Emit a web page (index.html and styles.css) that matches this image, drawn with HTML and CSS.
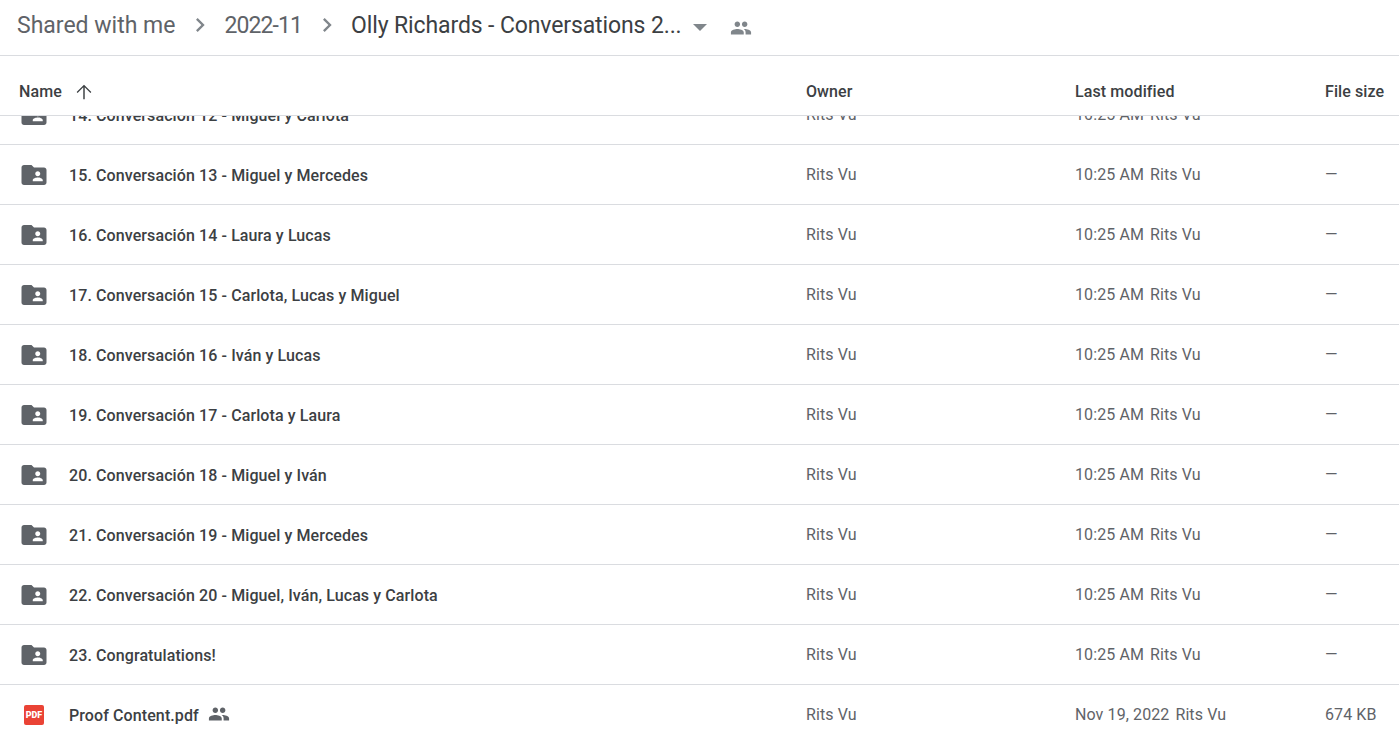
FILE: index.html
```html
<!DOCTYPE html>
<html lang="en">
<head>
<meta charset="utf-8">
<title>Olly Richards - Conversations 2</title>
<link rel="stylesheet" href="styles.css">
</head>
<body>
<svg class="defs" width="0" height="0" aria-hidden="true">
  <symbol id="folder" viewBox="0 0 24 24"><path d="M20 6h-8l-2-2H4c-1.1 0-1.99.9-1.99 2L2 18c0 1.1.9 2 2 2h16c1.1 0 2-.9 2-2V8c0-1.1-.9-2-2-2zm-5 3c1.1 0 2 .9 2 2s-.9 2-2 2-2-.9-2-2 .9-2 2-2zm4 8h-8v-1c0-1.33 2.67-2 4-2s4 .67 4 2v1z"/></symbol>
  <symbol id="people" viewBox="0 0 24 24"><path d="M16 11c1.66 0 2.99-1.34 2.99-3S17.66 5 16 5c-1.66 0-3 1.34-3 3s1.34 3 3 3zm-8 0c1.66 0 2.99-1.34 2.99-3S9.66 5 8 5C6.34 5 5 6.34 5 8s1.34 3 3 3zm0 2c-2.33 0-7 1.17-7 3.5V19h14v-2.5c0-2.33-4.67-3.5-7-3.5zm8 0c-.29 0-.62.02-.97.05 1.16.84 1.97 1.97 1.97 3.45V19h6v-2.5c0-2.33-4.67-3.5-7-3.5z"/></symbol>
  <symbol id="chevron" viewBox="0 0 24 24"><path d="M10 6L8.59 7.41 13.17 12l-4.58 4.59L10 18l6-6z"/></symbol>
</svg>

<header class="crumbs">
  <span class="crumb">Shared with me</span>
  <svg class="chev"><use href="#chevron"/></svg>
  <span class="crumb year">2022-11</span>
  <svg class="chev"><use href="#chevron"/></svg>
  <span class="crumb current">Olly Richards - Conversations 2...</span>
  <svg class="caret" viewBox="0 0 14 7"><path d="M0 0h14L7 7z"/></svg>
  <svg class="crumb-people"><use href="#people"/></svg>
</header>

<div class="row head">
  <div class="name-head">Name
    <svg class="arrow" viewBox="0 0 24 24"><path d="M4 12l1 1 6.2-6.3V20h1.6V6.7L19 13l1-1-8-8-8 8z"/></svg>
  </div>
  <div>Owner</div>
  <div>Last modified</div>
  <div>File size</div>
</div>

<main class="list">
  <div class="scroller">
    <div class="row item"><div class="name"><svg class="folder"><use href="#folder"/></svg><span class="label">14. Conversación 12 - Miguel y Carlota</span></div><div>Rits Vu</div><div class="mod"><span>10:25 AM</span><span>Rits Vu</span></div><div class="size">—</div></div>
    <div class="row item"><div class="name"><svg class="folder"><use href="#folder"/></svg><span class="label">15. Conversación 13 - Miguel y Mercedes</span></div><div>Rits Vu</div><div class="mod"><span>10:25 AM</span><span>Rits Vu</span></div><div class="size">—</div></div>
    <div class="row item"><div class="name"><svg class="folder"><use href="#folder"/></svg><span class="label">16. Conversación 14 - Laura y Lucas</span></div><div>Rits Vu</div><div class="mod"><span>10:25 AM</span><span>Rits Vu</span></div><div class="size">—</div></div>
    <div class="row item"><div class="name"><svg class="folder"><use href="#folder"/></svg><span class="label">17. Conversación 15 - Carlota, Lucas y Miguel</span></div><div>Rits Vu</div><div class="mod"><span>10:25 AM</span><span>Rits Vu</span></div><div class="size">—</div></div>
    <div class="row item"><div class="name"><svg class="folder"><use href="#folder"/></svg><span class="label">18. Conversación 16 - Iván y Lucas</span></div><div>Rits Vu</div><div class="mod"><span>10:25 AM</span><span>Rits Vu</span></div><div class="size">—</div></div>
    <div class="row item"><div class="name"><svg class="folder"><use href="#folder"/></svg><span class="label">19. Conversación 17 - Carlota y Laura</span></div><div>Rits Vu</div><div class="mod"><span>10:25 AM</span><span>Rits Vu</span></div><div class="size">—</div></div>
    <div class="row item"><div class="name"><svg class="folder"><use href="#folder"/></svg><span class="label">20. Conversación 18 - Miguel y Iván</span></div><div>Rits Vu</div><div class="mod"><span>10:25 AM</span><span>Rits Vu</span></div><div class="size">—</div></div>
    <div class="row item"><div class="name"><svg class="folder"><use href="#folder"/></svg><span class="label">21. Conversación 19 - Miguel y Mercedes</span></div><div>Rits Vu</div><div class="mod"><span>10:25 AM</span><span>Rits Vu</span></div><div class="size">—</div></div>
    <div class="row item"><div class="name"><svg class="folder"><use href="#folder"/></svg><span class="label">22. Conversación 20 - Miguel, Iván, Lucas y Carlota</span></div><div>Rits Vu</div><div class="mod"><span>10:25 AM</span><span>Rits Vu</span></div><div class="size">—</div></div>
    <div class="row item"><div class="name"><svg class="folder"><use href="#folder"/></svg><span class="label">23. Congratulations!</span></div><div>Rits Vu</div><div class="mod"><span>10:25 AM</span><span>Rits Vu</span></div><div class="size">—</div></div>
    <div class="row item"><div class="name"><span class="pdf">PDF</span><span class="label">Proof Content.pdf</span><svg class="shared"><use href="#people"/></svg></div><div>Rits Vu</div><div class="mod"><span>Nov 19, 2022</span><span>Rits Vu</span></div><div class="size">674 KB</div></div>
  </div>
</main>
</body>
</html>
```

FILE: styles.css
```css
* { box-sizing: border-box; }

html, body {
  margin: 0;
  height: 100%;
  overflow: hidden;
}

body {
  display: flex;
  flex-direction: column;
  background: #fff;
  font-family: Roboto, "Liberation Sans", sans-serif;
  color: #5f6368;
}

.defs { position: absolute; }

.crumbs {
  flex: none;
  height: 56px;
  display: flex;
  align-items: center;
  padding: 0 0 6px 17px;
  border-bottom: 1px solid #dadce0;
  font-size: 23px;
  line-height: 28px;
  white-space: nowrap;
}

.crumb {
  padding-top: 2px;
  color: #5f6368;
}

.year { letter-spacing: -0.9px; }

.current {
  color: #3c4043;
  letter-spacing: -0.12px;
}

.chev {
  width: 28px;
  height: 28px;
  margin: 0 10px 0 11px;
  fill: #80868b;
}

.caret {
  width: 14px;
  height: 7px;
  margin: 5px 0 0 11px;
  fill: #80868b;
}

.crumb-people {
  width: 22px;
  height: 22px;
  margin: 6px 0 0 23px;
  fill: #80868b;
}

.row {
  display: grid;
  grid-template-columns: 806px 269px 250px 1fr;
  align-items: center;
  font-size: 16px;
  letter-spacing: 0.1px;
  white-space: nowrap;
}

.head {
  flex: none;
  height: 60px;
  padding-top: 12px;
  border-bottom: 1px solid #dadce0;
  color: #3c4043;
  font-weight: 500;
}

.name-head {
  display: flex;
  align-items: center;
  gap: 11px;
  padding-left: 19px;
  color: #3c4043;
}

.arrow {
  width: 22px;
  height: 22px;
  fill: #3c4043;
}

.list {
  flex: 1;
  min-height: 0;
  overflow: hidden;
}

.scroller { margin-top: -31px; }

.item {
  height: 60px;
  border-bottom: 1px solid #dadce0;
}

.name {
  display: flex;
  align-items: center;
  color: #3c4043;
  font-weight: 500;
}

.label { padding-top: 2px; }

.folder {
  width: 30px;
  height: 30px;
  margin: 0 20px 0 19px;
  fill: #5f6368;
}

.pdf {
  width: 20px;
  height: 20px;
  margin: 0 25px 0 24px;
  border-radius: 2px;
  background: #ea4335;
  color: #fff;
  font-size: 9px;
  font-weight: 900;
  letter-spacing: 0;
  line-height: 20px;
  text-align: center;
}

.shared {
  width: 22px;
  height: 22px;
  margin: -2px 0 0 9px;
  fill: #5f6368;
}

.mod {
  display: flex;
  gap: 6px;
}
```
